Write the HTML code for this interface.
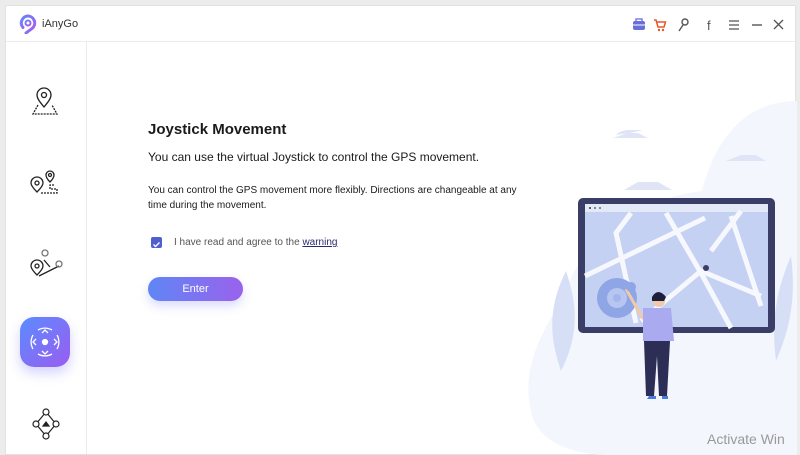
<!DOCTYPE html>
<html><head><meta charset="utf-8"><style>
*{margin:0;padding:0;box-sizing:border-box}
body{width:800px;height:449px;overflow:hidden;background:#ececec;font-family:"Liberation Sans",sans-serif;position:relative}
.win{position:absolute;left:5px;top:5px;width:791px;height:450px;background:#fff;border:1px solid #e2e2e2}
.hdr{position:absolute;left:0;top:0;right:0;height:36px;border-bottom:1px solid #ececec}
.side{position:absolute;left:0;top:36px;width:81px;bottom:0;border-right:1px solid #ececec}
.t{position:absolute;color:#1a1a1a;white-space:nowrap}
</style></head><body>
<div class="win">
<div class="hdr">
<svg style="position:absolute;left:13px;top:8px" width="18" height="20" viewBox="0 0 18 20"><defs><linearGradient id="g" x1="0" y1="0" x2="1" y2="1"><stop offset="0" stop-color="#5b8cff"/><stop offset="1" stop-color="#b255e8"/></linearGradient></defs><path d="M9 2a7 7 0 0 1 4 12.5L7 19" fill="none" stroke="url(#g)" stroke-width="3" stroke-linecap="round"/><path d="M9 2a7 7 0 0 0-5 11.5" fill="none" stroke="url(#g)" stroke-width="3" stroke-linecap="round"/><circle cx="9" cy="9" r="2.5" fill="none" stroke="url(#g)" stroke-width="2"/></svg>
<div class="t" style="left:36px;top:12px;font-size:11px;color:#333">iAnyGo</div>
<svg style="position:absolute;left:625px;top:11px" width="160" height="16" viewBox="0 0 160 16">
<rect x="2" y="4" width="12" height="9" rx="2" fill="#6a6fd8"/><rect x="5" y="2" width="6" height="3" fill="none" stroke="#6a6fd8" stroke-width="1.3"/><line x1="2" y1="8" x2="14" y2="8" stroke="#fff"/>
<path d="M23 3h2l2 7h6l1.5-5H26" fill="none" stroke="#e8552a" stroke-width="1.5"/><circle cx="28" cy="13" r="1.2" fill="#e8552a"/><circle cx="32" cy="13" r="1.2" fill="#e8552a"/>
<path d="M48 14l4-6" stroke="#555" stroke-width="1.4"/><circle cx="54" cy="5" r="3" fill="none" stroke="#555" stroke-width="1.4"/>
<text x="76" y="13" font-size="13" fill="#555" font-family="Liberation Sans">f</text>
<path d="M98 4h10M98 8h10M98 12h10" stroke="#555" stroke-width="1.3"/>
<path d="M121 8h10" stroke="#555" stroke-width="1.4"/>
<path d="M143 3l9 9M152 3l-9 9" stroke="#555" stroke-width="1.3"/>
</svg>
</div>
<div class="side">
<svg style="position:absolute;left:23px;top:45px" width="30" height="30" viewBox="0 0 30 30" fill="none" stroke="#222" stroke-width="1.3"><path d="M15 20c-5-6-7-9-7-12a7 7 0 0 1 14 0c0 3-2 6-7 12z"/><circle cx="15" cy="8" r="2.5"/><path d="M9 18l-5 9h24l-5-9" stroke-dasharray="2 1"/></svg>
<svg style="position:absolute;left:23px;top:125px" width="34" height="30" viewBox="0 0 34 30" fill="none" stroke="#222" stroke-width="1.3"><path d="M8 25c-4-4-6-7-6-9a6 6 0 0 1 12 0c0 2-2 5-6 9z"/><circle cx="8" cy="16" r="2"/><path d="M21 15c-3-3-4-5-4-7a4 4 0 0 1 8 0c0 2-1 4-4 7z"/><circle cx="21" cy="8" r="1.5"/><path d="M12 26h16v-4h-7v-4h4" stroke-dasharray="2 1"/></svg>
<svg style="position:absolute;left:23px;top:203px" width="36" height="34" viewBox="0 0 36 34" fill="none" stroke="#222" stroke-width="1.3"><path d="M8 30c-4-4-6-7-6-9a6 6 0 0 1 12 0c0 2-2 5-6 9z"/><circle cx="8" cy="21" r="2"/><path d="M10 31l20-10M15 15l6 7" /><circle cx="16" cy="8" r="3" stroke="#777"/><circle cx="30" cy="19" r="3" stroke="#777"/></svg>
<div style="position:absolute;left:14px;top:275px;width:50px;height:50px;border-radius:14px;background:linear-gradient(135deg,#5b8cff,#9a5cf0);box-shadow:0 6px 12px rgba(110,110,250,.3)">
<svg width="50" height="50" viewBox="0 0 50 50" fill="none" stroke="#fff" stroke-width="1.3"><circle cx="25" cy="25" r="2.5" fill="#fff"/><path d="M22 16l3-3 3 3M22 34l3 3 3-3M16 22l-3 3 3 3M34 22l3 3-3 3"/><path d="M18 13a14 14 0 0 1 14 0M18 37a14 14 0 0 0 14 0M13 18a14 14 0 0 0 0 14M37 18a14 14 0 0 1 0 14"/></svg></div>
<svg style="position:absolute;left:25px;top:365px" width="30" height="34" viewBox="0 0 30 34" fill="none" stroke="#222" stroke-width="1.2"><path d="M15 5l10 12-10 12-10-12z"/><circle cx="15" cy="5" r="3" fill="#fff"/><circle cx="15" cy="29" r="3" fill="#fff"/><circle cx="5" cy="17" r="3" fill="#fff"/><circle cx="25" cy="17" r="3" fill="#fff"/><path d="M12 19l3-4 3 4z" fill="#222"/></svg>
</div>
<div class="t" style="left:142px;top:115px;font-size:15px;font-weight:bold">Joystick Movement</div>
<div class="t" style="left:142px;top:144px;font-size:12px">You can use the virtual Joystick to control the GPS movement.</div>
<div class="t" style="left:142px;top:177px;font-size:10px;line-height:15px;white-space:normal;width:385px">You can control the GPS movement more flexibly. Directions are changeable at any time during the movement.</div>
<div style="position:absolute;left:145px;top:231px;width:11px;height:11px;background:#4f5fd0;border-radius:2px"><svg width="11" height="11"><path d="M2.5 5.5l2 2 4-4" stroke="#fff" fill="none" stroke-width="1.4"/></svg></div>
<div class="t" style="left:168px;top:231px;font-size:10px;color:#555">I have read and agree to the <span style="color:#2a2a6e;text-decoration:underline">warning</span></div>
<div style="position:absolute;left:142px;top:271px;width:95px;height:24px;border-radius:12px;background:linear-gradient(90deg,#5f86f5,#9a62ec);color:#fff;font-size:11px;text-align:center;line-height:24px;box-shadow:0 5px 10px rgba(110,110,250,.25)">Enter</div>
<svg style="position:absolute;left:515px;top:95px" width="276" height="354" viewBox="0 0 276 354">
<path d="M276 0c-60 0-85 50-95 90-50 5-120 40-140 110C20 230 0 270 10 310c5 30 40 44 80 44h186z" fill="#f3f6fc"/>
<path d="M95 34q5-5 12-5h15l-13 3z" fill="#dfe5f6"/><path d="M92 37h35l-10-5h-10z" fill="#dfe5f6"/>
<path d="M205 60h40l-10-6h-15z" fill="#dfe5f6"/><path d="M103 89h48l-14-8h-20z" fill="#dfe5f6"/>
<path d="M40 270c-10-30 -15-60 5-100 10 30 15 60 -5 100z" fill="#d6dff5"/>
<path d="M255 260c-5-40 0-70 15-105 5 40 0 70-15 105z" fill="#d6dff5"/>
<rect x="57" y="97" width="197" height="135" rx="5" fill="#3a3d66"/>
<rect x="64" y="103" width="183" height="123" fill="#c5d1f3"/>
<rect x="64" y="103" width="183" height="8" fill="#e4e9f7"/>
<circle cx="69" cy="107" r="1" fill="#333"/><circle cx="74" cy="107" r="1" fill="#666"/><circle cx="79" cy="107" r="1" fill="#666"/>
<g stroke="#f6f8fd" stroke-width="5" fill="none"><path d="M64 175l120-58"/><path d="M110 112l-15 20 20 90"/><path d="M145 112l35 60 30 55"/><path d="M120 220l60-50 60 25"/><path d="M210 115l30 90"/><path d="M190 150l30-40"/></g>
<circle cx="185" cy="167" r="3" fill="#3a3d66"/>
<circle cx="96" cy="197" r="20" fill="#8fa6e6"/><circle cx="96" cy="197" r="10" fill="#b7c6f0"/><circle cx="96" cy="197" r="4" fill="#a3b5ec"/>
<path d="M105 188l17 30" stroke="#f1c9a8" stroke-width="3"/>
<circle cx="110" cy="186" r="5" fill="#8fa6e6"/>
<path d="M122 207h28l3 33h-31z" fill="#a9aaf0"/>
<path d="M123 240h26l-3 55h-8l-2-40-3 40h-8z" fill="#2c2e55"/>
<circle cx="138" cy="200" r="6" fill="#f1c9a8"/><path d="M131 196q6-10 14 0l-2 4h-12z" fill="#1d1f3a"/>
<path d="M128 295h7v3h-9zM141 295h6v3h-6z" fill="#4a7be0"/>
</svg>
<div class="t" style="left:701px;top:425px;font-size:14px;color:#999">Activate Win</div>
</div>
</body></html>
